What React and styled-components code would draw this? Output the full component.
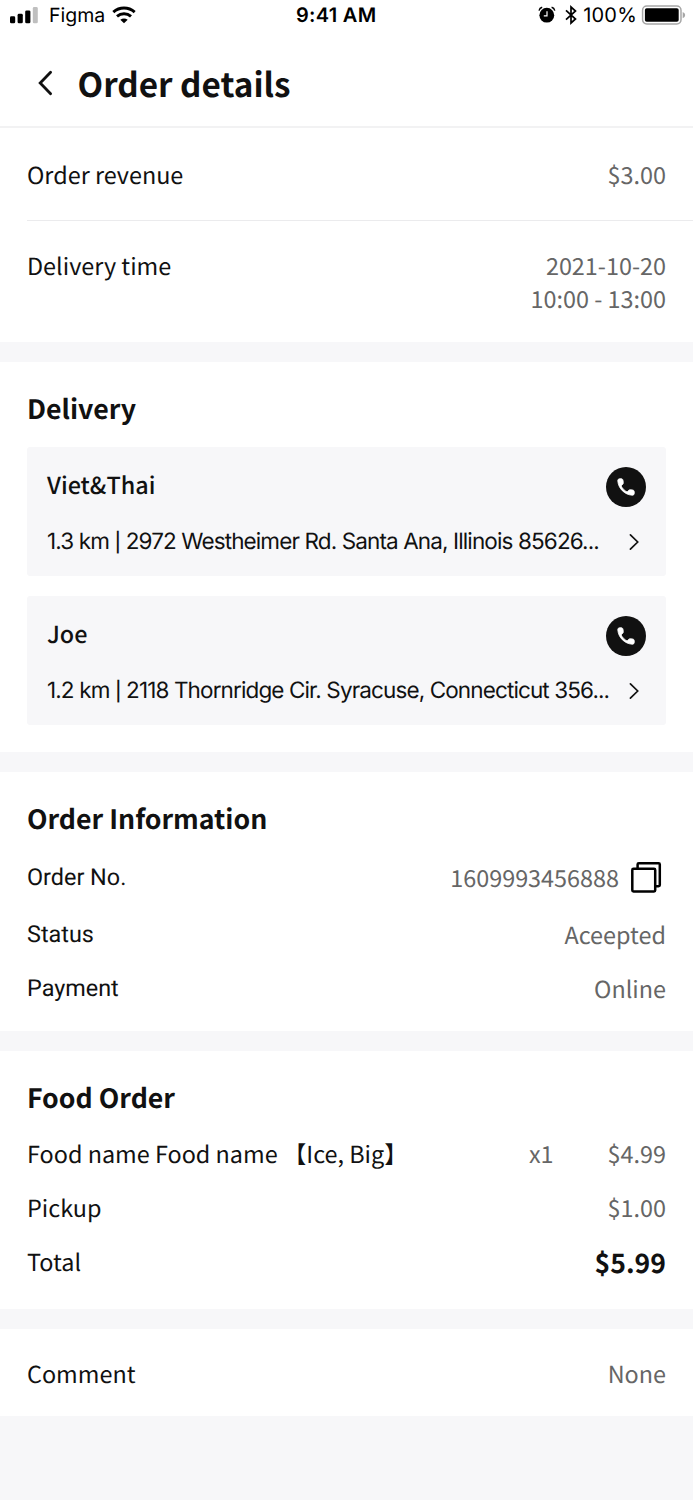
import { createGlobalStyle, styled } from "styled-components";


const deliveries = [
    { name: 'Viet&Thai', distance: '1.3 km', address: '2972 Westheimer Rd. Santa Ana, Illinois 85626...' },
    { name: 'Joe', distance: '1.2 km', address: '2118 Thornridge Cir. Syracuse, Connecticut 356...' },
];

export default function App()
{
    return(
    <Page>
        <GlobalStyle/>
        <StatusBar>
            <StatusGroup>
                <SignalIcon/>
                <Carrier>Figma</Carrier>
                <WifiIcon/>
            </StatusGroup>
            <Clock>9:41 AM</Clock>
            <StatusGroup $align = 'flex-end'>
                <AlarmIcon/>
                <BluetoothIcon/>
                <Percent>100%</Percent>
                <BatteryIcon/>
            </StatusGroup>
        </StatusBar>

        <Header>
            <BackButton aria-label="Back">
                <svg width="16" height="26" viewBox="0 0 16 26" fill="none" stroke="#111" strokeWidth="2.8" strokeLinecap="round"><path d="M13.6 2.3 3.2 13 13.6 23.7"/></svg>
            </BackButton>
            <h1>Order details</h1>
        </Header>

        <Summary>
            <RevenueRow>
                <Label>Order revenue</Label>
                <Value>$3.00</Value>
            </RevenueRow>
            <TimeRow>
                <Label>Delivery time</Label>
                <Value>2021-10-20<br/>10:00 - 13:00</Value>
            </TimeRow>
        </Summary>

        <DeliverySection>
            <Title>Delivery</Title>
            <CardList>
                {deliveries.map((item) => (
                    <Card key={item.name}>
                        <CardTop>
                            <h3>{item.name}</h3>
                            <CallButton aria-label="Call"><PhoneIcon/></CallButton>
                        </CardTop>
                        <CardBottom>
                            <p>{item.distance} <Divider>|</Divider> {item.address}</p>
                            <svg width="12" height="18" viewBox="0 0 12 18" fill="none" stroke="#111" strokeWidth="1.7" strokeLinecap="round"><path d="M1.4 1.8 8.7 9 1.4 16.2"/></svg>
                        </CardBottom>
                    </Card>
                ))}
            </CardList>
        </DeliverySection>

        <InfoSection>
            <Title>Order Information</Title>
            <Row $height = '60px'>
                <InfoLabel>Order No.</InfoLabel>
                <OrderNumber>
                    1609993456888
                    <CopyIcon/>
                </OrderNumber>
            </Row>
            <Row $height = '54px'>
                <InfoLabel>Status</InfoLabel>
                <Value>Aceepted</Value>
            </Row>
            <Row $height = '53px'>
                <InfoLabel>Payment</InfoLabel>
                <Value>Online</Value>
            </Row>
        </InfoSection>

        <FoodSection>
            <Title>Food Order</Title>
            <Row $height = '54px'>
                <FoodName>Food name Food name 【Ice, Big】</FoodName>
                <Quantity>x1</Quantity>
                <Value>$4.99</Value>
            </Row>
            <Row $height = '54px'>
                <Label>Pickup</Label>
                <Value>$1.00</Value>
            </Row>
            <Row $height = '53px'>
                <Label>Total</Label>
                <Total>$5.99</Total>
            </Row>
        </FoodSection>

        <CommentSection>
            <Label>Comment</Label>
            <Value>None</Value>
        </CommentSection>
    </Page>
    );
}

function SignalIcon()
{
    return(
    <svg width="28" height="17" viewBox="0 0 28 17">
        <rect x="0" y="9.3" width="5.2" height="7" rx="1.4"/>
        <rect x="7.6" y="6.8" width="5.2" height="9.5" rx="1.4"/>
        <rect x="15.2" y="3.4" width="5.2" height="12.9" rx="1.4"/>
        <rect x="22.8" y="0" width="5" height="16.3" rx="1.4" fill="#bfbfbf"/>
    </svg>
    );
}

function WifiIcon()
{
    return(
    <svg width="24" height="18" viewBox="0 0 24 18" fill="none" stroke="#000" strokeWidth="2.9">
        <path d="M1.3 6.1Q6 2 12 2T22.7 6.1"/>
        <path d="M5 10.4Q8 7.7 12 7.7T19 10.4"/>
        <path d="M8.3 13.8Q12 11.2 15.7 13.8L12 17.2Z" fill="#000" stroke="none"/>
    </svg>
    );
}

function AlarmIcon()
{
    return(
    <svg width="18" height="18" viewBox="0 0 18 18" fill="none">
        <circle cx="8.8" cy="9.2" r="7.4" fill="#000"/>
        <path d="M9 5.2V9.8H5.8" stroke="#fff" strokeWidth="1.2"/>
        <path d="M1 4.6Q1.6 2 4.2 1.3M16.8 4.6Q16.2 2 13.6 1.3" stroke="#000" strokeWidth="1.4"/>
    </svg>
    );
}

function BluetoothIcon()
{
    return(
    <BluetoothSvg width="12" height="20" viewBox="0 0 12 20" fill="none" stroke="#000" strokeWidth="1.7"><path d="M1 5.3 10.5 14 6 18V2L10.5 6 1 14.7"/></BluetoothSvg>
    );
}

function BatteryIcon()
{
    return(
    <svg width="45" height="20" viewBox="0 0 45 20" fill="none">
        <rect x="1.6" y="1" width="38.4" height="18" rx="4.2" stroke="#a6a6a6" strokeWidth="1.5"/>
        <rect x="3.9" y="3.3" width="33.8" height="13.4" rx="1.8" fill="#000"/>
        <path d="M41.7 6.9Q44.2 7.9 44.2 10.1T41.7 13.3Z" fill="#a6a6a6"/>
    </svg>
    );
}

function PhoneIcon()
{
    return(
    <svg width="22" height="22" viewBox="0 0 24 24" fill="currentColor">
        <path d="M19.23 15.26l-2.54-.29c-.61-.07-1.21.14-1.64.57l-1.84 1.84c-2.83-1.44-5.15-3.75-6.59-6.59l1.85-1.85c.43-.43.64-1.03.57-1.64l-.29-2.52c-.12-1.01-.97-1.77-1.99-1.77H5.03c-1.13 0-2.07.94-2 2.07.53 8.54 7.36 15.36 15.89 15.89 1.13.07 2.07-.87 2.07-2v-1.73c.01-1.01-.75-1.86-1.76-1.98z" stroke="currentColor" strokeWidth=".9"/>
    </svg>
    );
}

function CopyIcon()
{
    return(
    <svg width="32" height="32" viewBox="0 0 32 32" fill="none" stroke="#000" strokeWidth="2.5">
        <path d="M7.6 7V3.5Q7.6 2.3 8.8 2.3H28.6Q29.8 2.3 29.8 3.5V24Q29.8 25.2 28.6 25.2H26"/>
        <rect x="2.3" y="7.8" width="22.9" height="22.6" rx="1.2"/>
    </svg>
    );
}

const GlobalStyle = createGlobalStyle`
    * {
        box-sizing: border-box;
    }
    body {
        margin: 0;
        background-color: #f7f7f9;
        font-family: "Noto Sans CJK SC", sans-serif;
        color: #111;
        text-rendering: geometricPrecision;
    }
    h1, h2, h3, p {
        margin: 0;
    }
    button {
        border: 0;
        padding: 0;
        background: none;
    }
    svg {
        display: block;
        flex-shrink: 0;
    }
`;

const Page = styled.div`
    width: 693px;
    height: 1500px;
    background-color: #f7f7f9;
    overflow: hidden;
`;

const StatusBar = styled.div`
    display: grid;
    grid-template-columns: 286px auto 1fr;
    align-items: center;
    height: 30px;
    padding: 0 7px 0 10px;
    background-color: white;
    font-family: Inter, sans-serif;
    color: black;
`;

const StatusGroup = styled.div`
    display: flex;
    align-items: center;
    justify-content: ${(props) => props.$align || 'flex-start'};
`;

const BluetoothSvg = styled.svg`
    margin-left: 9px;
`;

const Carrier = styled.span`
    margin: 0 7px 0 11px;
    font-size: 19.5px;
`;

const Clock = styled.span`
    font-size: 20px;
    font-weight: 600;
    letter-spacing: 0.3px;
`;

const Percent = styled.span`
    margin: 0 4px 0 6px;
    font-size: 20px;
    letter-spacing: 0.2px;
`;

const Header = styled.header`
    display: flex;
    align-items: center;
    height: 98px;
    padding: 10px 37px 0;
    gap: 24.5px;
    background-color: white;
    border-bottom: 2px solid #f2f2f3;

    h1{
        font-size: 33.3px;
        font-weight: 700;
        line-height: 48px;
    }
`;

const BackButton = styled.button`
    width: 16px;
`;

const Summary = styled.section`
    height: 214px;
    padding-left: 27px;
    background-color: white;
`;

const Label = styled.span`
    font-size: 23.4px;
    line-height: 34px;
`;

const Value = styled.span`
    font-size: 23.4px;
    line-height: 34px;
    color: #666;
    text-align: right;
`;

const RevenueRow = styled.div`
    display: flex;
    align-items: center;
    justify-content: space-between;
    height: 93px;
    padding-right: 27px;
    border-bottom: 1px solid #ebebed;
`;

const TimeRow = styled.div`
    display: flex;
    justify-content: space-between;
    padding: 28px 27px 0 0;

    ${Label}, ${Value}{
        line-height: 33.4px;
    }
`;

const Section = styled.section`
    margin-top: 20px;
    padding: 0 27px;
    background-color: white;
`;

const Title = styled.h2`
    font-size: 26.7px;
    font-weight: 700;
    line-height: 40px;
`;

const DeliverySection = styled(Section)`
    height: 390px;
    padding-top: 26px;
`;

const CardList = styled.div`
    display: flex;
    flex-direction: column;
    gap: 20px;
    margin-top: 19px;
`;

const Card = styled.div`
    height: 129px;
    padding: 20px;
    border-radius: 3px;
    background-color: #f7f7f9;
`;

const CardTop = styled.div`
    display: flex;
    justify-content: space-between;

    h3{
        font-size: 23.4px;
        font-weight: 500;
        line-height: 35px;
    }
`;

const CallButton = styled.button`
    display: flex;
    align-items: center;
    justify-content: center;
    width: 40px;
    height: 40px;
    border-radius: 50%;
    background-color: #111;
    color: white;
`;

const CardBottom = styled.div`
    display: flex;
    align-items: center;
    justify-content: space-between;
    margin-top: 17px;
    padding-right: 5px;

    p{
        padding-top: 1px;
        font-family: Inter, sans-serif;
        font-size: 22.5px;
        line-height: 34px;
        letter-spacing: -0.88px;
        white-space: nowrap;
    }
`;

const Divider = styled.span`
    font-size: 19px;
    font-weight: 500;
`;

const InfoSection = styled(Section)`
    height: 259px;
    padding-top: 26px;
`;

const Row = styled.div`
    display: flex;
    align-items: center;
    height: ${(props) => props.$height};

    ${Title} + &{
        margin-top: 9px;
    }

    & > :first-child{
        flex: 1;
    }
`;

const InfoLabel = styled(Label)`
    font-family: Roboto, sans-serif;
`;

const OrderNumber = styled(Value)`
    display: flex;
    align-items: center;
    gap: 11px;
    padding-right: 4px;
`;

const FoodSection = styled(Section)`
    height: 258px;
    padding-top: 26px;
`;

const FoodName = styled(Label)`
    white-space: nowrap;
`;

const Quantity = styled(Value)`
    margin-right: 54px;
`;

const Total = styled(Value)`
    padding-top: 3px;
    font-size: 26.6px;
    font-weight: 700;
    color: #111;
`;

const CommentSection = styled(Section)`
    display: flex;
    align-items: center;
    justify-content: space-between;
    height: 87px;
`;
